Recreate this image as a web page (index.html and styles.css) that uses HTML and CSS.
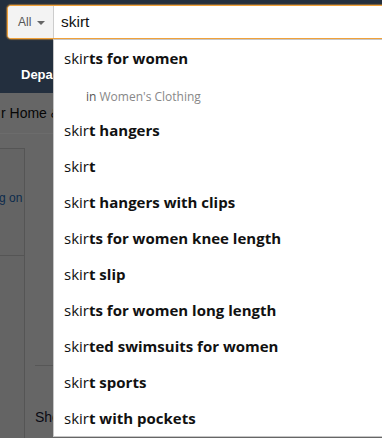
FILE: index.html
```html
<!DOCTYPE html>
<html lang="en">
<head>
<meta charset="utf-8">
<title>skirt - search</title>
<link rel="stylesheet" href="styles.css">
</head>
<body>
<div class="page">
  <header class="nav">
    <div class="search">
      <div class="scope"><span class="scope-label">All</span><span class="caret"></span></div>
      <div class="field">skirt</div>
    </div>
    <div class="belt"><span class="dept">Departments</span></div>
  </header>
  <main class="dim">
    <div class="strip"><span class="strip-text">r Home &amp; Kitchen</span></div>
    <div class="content">
      <div class="leftcol">
        <div class="card card-top"><span class="link">g on</span></div>
        <div class="card card-bottom"></div>
      </div>
      <div class="rightcol">
        <div class="rule"></div>
        <div class="show">Shop by Category</div>
      </div>
    </div>
  </main>
  <ul class="suggest">
    <li class="item">skir<b>ts for women</b></li>
    <li class="item sub"><span class="in">in</span> Women's Clothing</li>
    <li class="item">skir<b>t hangers</b></li>
    <li class="item">skir<b>t</b></li>
    <li class="item">skir<b>t hangers with clips</b></li>
    <li class="item">skir<b>ts for women knee length</b></li>
    <li class="item">skir<b>t slip</b></li>
    <li class="item">skir<b>ts for women long length</b></li>
    <li class="item">skir<b>ted swimsuits for women</b></li>
    <li class="item">skir<b>t sports</b></li>
    <li class="item">skir<b>t with pockets</b></li>
  </ul>
</div>
</body>
</html>
```
FILE: styles.css
```css
* { box-sizing: border-box; }
html, body { margin: 0; padding: 0; }
body {
  width: 382px;
  height: 438px;
  overflow: hidden;
  background: #666666;
  font-family: "Liberation Sans", Arial, sans-serif;
}
.page {
  position: relative;
  width: 382px;
  height: 438px;
  overflow: hidden;
}
.nav {
  background: #232f3e;
  height: 93px;
  padding-top: 5px;
}
.search {
  display: flex;
  margin-left: 7px;
  width: 420px;
  height: 34px;
  border: 1px solid #f0a13a;
  border-radius: 4px;
  box-shadow: 0 0 1px 1px rgba(240, 161, 58, 0.45);
  background: #fff;
  overflow: hidden;
}
.scope {
  width: 46px;
  flex: none;
  display: flex;
  align-items: center;
  padding-left: 10px;
  gap: 6px;
  background: #f3f3f3;
  border-right: 1px solid #cdcdcd;
  color: #555;
  font-size: 12px;
}
.caret {
  width: 0;
  height: 0;
  border-left: 4px solid transparent;
  border-right: 4px solid transparent;
  border-top: 4px solid #666;
  margin-top: 1px;
}
.field {
  display: flex;
  align-items: center;
  padding-left: 7px;
  font-size: 15.5px;
  color: #111;
  padding-bottom: 1px;
}
.belt {
  height: 54px;
  display: flex;
  align-items: center;
  padding-left: 21px;
  padding-top: 16px;
}
.dept {
  color: #fff;
  font-weight: bold;
  font-size: 13px;
}
.dim {
  color: #060606;
}
.strip {
  height: 41px;
  border-bottom: 1px solid #6c6c6c;
  display: flex;
  align-items: center;
  padding-left: 1px;
  padding-bottom: 1px;
}
.strip-text {
  font-size: 14px;
  white-space: nowrap;
  width: 52px;
  overflow: hidden;
}
.content {
  display: grid;
  grid-template-columns: 25px 1fr;
}
.leftcol {
  padding-top: 14px;
}
.card {
  border-top: 1px solid #555;
  border-right: 1px solid #555;
  background: #646464;
  overflow: hidden;
}
.card-top {
  height: 107px;
  display: flex;
  align-items: center;
  padding-bottom: 8px;
}
.link {
  color: #0c2b4c;
  font-size: 12px;
  white-space: nowrap;
  margin-left: -1px;
}
.card-bottom {
  height: 200px;
}
.rightcol {
  padding-left: 10px;
}
.rule {
  margin-top: 231px;
  border-top: 1px solid #575757;
}
.show {
  margin-top: 41px;
  width: 18px;
  overflow: hidden;
  line-height: 20px;
  font-size: 14px;
  white-space: nowrap;
  color: #0a0a14;
}
.suggest {
  position: absolute;
  left: 53px;
  top: 39px;
  width: 335px;
  height: 398px;
  margin: 0;
  padding: 0;
  list-style: none;
  background: #fff;
  border: 1px solid #c6c6c6;
  font-family: "Open Sans", "Noto Sans", sans-serif;
  color: #111;
}
.item {
  height: 36px;
  display: flex;
  align-items: center;
  padding-left: 10px;
  font-size: 15px;
  white-space: nowrap;
}
.item b {
  font-weight: 700;
  white-space: pre;
}
.sub {
  padding-left: 32px;
  padding-top: 4px;
  font-size: 12px;
  color: #888;
  white-space: pre;
}
.in {
  color: #555;
}
```
